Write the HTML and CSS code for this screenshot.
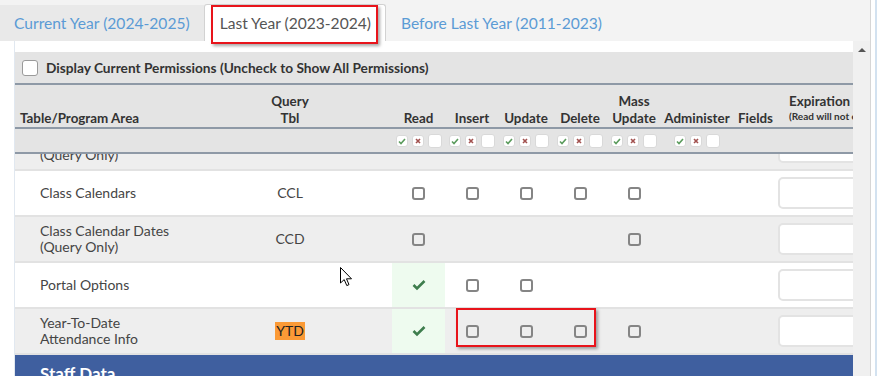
FILE: index.html
```html
<!DOCTYPE html>
<html lang="en">
<head>
    <meta charset="UTF-8">
    <title>Permissions</title>
    <link rel="stylesheet" href="styles.css">
</head>
<body>
<div class="screen">
    <div class="window">
        <div class="tabs">
            <div class="tab first">Current Year (2024-2025)</div>
            <div class="tab active">Last Year (2023-2024)</div>
            <div class="tab">Before Last Year (2011-2023)</div>
        </div>
        <div class="panel">
            <div class="sheet">
                <div class="head">
                    <div class="displayRow">
                        <span class="bigBox"></span>
                        Display Current Permissions (Uncheck to Show All Permissions)
                    </div>
                    <div class="row headRow">
                        <div class="cell area">Table/Program Area</div>
                        <div class="cell query">Query<br>Tbl</div>
                        <div class="cell mid">Read</div>
                        <div class="cell mid">Insert</div>
                        <div class="cell mid">Update</div>
                        <div class="cell mid">Delete</div>
                        <div class="cell mid">Mass<br>Update</div>
                        <div class="cell mid">Administer</div>
                        <div class="cell mid">Fields</div>
                        <div class="cell exp">Expiration<br><small>(Read will not expire)</small></div>
                    </div>
                    <div class="row toolRow" id="toolRow"></div>
                </div>
                <div class="body">
                    <div class="row line gray first">
                        <div class="cell area">Calendar Periods<br>(Query Only)</div>
                        <div class="cell query">CPR</div>
                        <div class="cell mid"><span class="cb"></span></div>
                        <div class="cell mid"></div>
                        <div class="cell mid"></div>
                        <div class="cell mid"></div>
                        <div class="cell mid"></div>
                        <div class="cell mid"></div>
                        <div class="cell mid"></div>
                        <div class="cell exp"><input class="date" type="text"></div>
                    </div>
                    <div class="row line">
                        <div class="cell area">Class Calendars</div>
                        <div class="cell query">CCL</div>
                        <div class="cell mid"><span class="cb"></span></div>
                        <div class="cell mid"><span class="cb"></span></div>
                        <div class="cell mid"><span class="cb"></span></div>
                        <div class="cell mid"><span class="cb"></span></div>
                        <div class="cell mid"><span class="cb"></span></div>
                        <div class="cell mid"></div>
                        <div class="cell mid"></div>
                        <div class="cell exp"><input class="date" type="text"></div>
                    </div>
                    <div class="row line gray">
                        <div class="cell area">Class Calendar Dates<br>(Query Only)</div>
                        <div class="cell query">CCD</div>
                        <div class="cell mid"><span class="cb"></span></div>
                        <div class="cell mid"></div>
                        <div class="cell mid"></div>
                        <div class="cell mid"></div>
                        <div class="cell mid"><span class="cb"></span></div>
                        <div class="cell mid"></div>
                        <div class="cell mid"></div>
                        <div class="cell exp"><input class="date" type="text"></div>
                    </div>
                    <div class="row line">
                        <div class="cell area">Portal Options</div>
                        <div class="cell query"></div>
                        <div class="cell mid granted">
                            <svg width="14" height="12" viewBox="0 0 14 12"><path d="M1.5 6 L5 9.5 L12.5 2" fill="none" stroke="#3e7d4d" stroke-width="2.6"/></svg>
                        </div>
                        <div class="cell mid"><span class="cb"></span></div>
                        <div class="cell mid"><span class="cb"></span></div>
                        <div class="cell mid"></div>
                        <div class="cell mid"></div>
                        <div class="cell mid"></div>
                        <div class="cell mid"></div>
                        <div class="cell exp"><input class="date" type="text"></div>
                    </div>
                    <div class="row line gray">
                        <div class="cell area">Year-To-Date<br>Attendance Info</div>
                        <div class="cell query"><span class="hit">YTD</span></div>
                        <div class="cell mid granted">
                            <svg width="14" height="12" viewBox="0 0 14 12"><path d="M1.5 6 L5 9.5 L12.5 2" fill="none" stroke="#3e7d4d" stroke-width="2.6"/></svg>
                        </div>
                        <div class="cell mid"><span class="cb"></span></div>
                        <div class="cell mid"><span class="cb"></span></div>
                        <div class="cell mid"><span class="cb"></span></div>
                        <div class="cell mid"><span class="cb"></span></div>
                        <div class="cell mid"></div>
                        <div class="cell mid"></div>
                        <div class="cell exp"><input class="date" type="text"></div>
                    </div>
                    <div class="section">Staff Data</div>
                </div>
            </div>
            <div class="scrollbar"><span class="arrowUp"></span></div>
        </div>

        <div class="mark tabMark"></div>
        <div class="mark boxMark"></div>
        <svg class="cursor" width="13" height="20" viewBox="0 0 13 20">
            <path d="M0.5 0.5 L0.5 16 L4.2 12.6 L6.8 18.6 L9 17.6 L6.5 11.8 L11.5 11.8 Z" fill="#fff" stroke="#000" stroke-width="1"/>
        </svg>
    </div>
    <div class="edge"></div>
</div>
<script>
    // the little set / clear / none buttons under each permission heading
    let tools = '<div class="cell area"></div><div class="cell query"></div>';
    let hasTools = [true, true, true, true, true, true, false];
    for (let i = 0; i < hasTools.length; i++) {
        if (hasTools[i]) {
            tools += `
                <div class="cell mid">
                    <span class="mini"><svg width="10" height="10" viewBox="0 0 10 10"><path d="M2 5.5 L4 7.5 L8 3" fill="none" stroke="#5a9b5c" stroke-width="1.6"/></svg></span>
                    <span class="mini"><svg width="10" height="10" viewBox="0 0 10 10"><path d="M3 3 L7 7 M7 3 L3 7" fill="none" stroke="#a2514f" stroke-width="1.6"/></svg></span>
                    <span class="mini blank"></span>
                </div>`;
        } else {
            tools += '<div class="cell mid"></div>';
        }
    }
    tools += '<div class="cell exp"></div>';
    document.getElementById("toolRow").innerHTML = tools;
</script>
</body>
</html>
```

FILE: styles.css
```css
body{
    margin: 0;
    font-family: Lato, "Open Sans", sans-serif;
    background-color: #fff;
    overflow: hidden;
}
.screen{
    display: flex;
    height: 376px;
}
.window{
    position: relative;
    width: 870px;
    border-right: 1px solid #d6d6d6;
    display: flex;
    flex-direction: column;
}
.edge{
    width: 2px;
    margin-left: 4px;
    background-color: #d3e2f0;
}

/* tabs */
.tabs{
    height: 41px;
    flex-shrink: 0;
    background-color: #f3f3f3;
    display: flex;
    align-items: flex-end;
}
.tab{
    height: 36px;
    padding: 0 14px 0 15px;
    display: flex;
    align-items: center;
    font-size: 15.6px;
    color: #5b9bd5;
    box-sizing: border-box;
}
.tab.first{
    padding-left: 14px;
    background-color: #e9e9e9;
}
.tab.active{
    height: 37px;
    background-color: #fff;
    color: #555;
    border: 1px solid #d2d2d2;
    border-bottom: none;
    border-radius: 3px 3px 0 0;
}

/* panel */
.panel{
    flex: 1;
    min-height: 0;
    display: flex;
    padding-left: 14px;
}
.sheet{
    flex: 1;
    min-width: 0;
    padding-top: 11px;
    border-left: 1px solid #e1e8f0;
    display: flex;
    flex-direction: column;
    overflow: hidden;
}
.scrollbar{
    width: 17px;
    background-color: #f0f0f0;
    display: flex;
    justify-content: center;
    padding-top: 7px;
    box-sizing: border-box;
}
.arrowUp{
    width: 0;
    height: 0;
    border-left: 4px solid transparent;
    border-right: 4px solid transparent;
    border-bottom: 4px solid #555;
}

/* header */
.head{
    background-color: #e4e4e4;
    flex-shrink: 0;
}
.displayRow{
    height: 31px;
    display: flex;
    align-items: center;
    gap: 8px;
    padding-left: 7px;
    font-size: 13.7px;
    font-weight: bold;
    color: #333;
    border-bottom: 2px solid #8e99a6;
}
.bigBox{
    width: 16px;
    height: 16px;
    box-sizing: border-box;
    border: 1px solid #9a9a9a;
    border-radius: 3px;
    background-color: #fff;
}
.row{
    display: grid;
    grid-template-columns: 215px 162px 53px 54px 54px 54px 54px 72px 45px 120px;
    width: 883px;
}
.cell{
    display: flex;
    align-items: center;
    justify-content: center;
    text-align: center;
}
.cell.area{
    justify-content: flex-start;
    text-align: left;
    padding-left: 25px;
}
.cell.query{
    padding-right: 42px;
}
.cell.exp{
    justify-content: flex-start;
    text-align: left;
}
.headRow{
    height: 42px;
    font-size: 13.4px;
    font-weight: bold;
    color: #333;
    line-height: 17px;
    border-bottom: 2px solid #8e99a6;
}
.headRow .cell{
    align-items: flex-end;
}
.headRow .cell.area{
    padding-left: 5px;
}
.headRow .cell.exp{
    padding-left: 11px;
    white-space: nowrap;
    display: block;
    padding-top: 8px;
}
.headRow small{
    font-size: 10px;
    font-weight: bold;
    line-height: 12px;
    display: block;
}
.toolRow{
    height: 23px;
    border-bottom: 2px solid #8e99a6;
}
.toolRow .cell{
    gap: 4px;
}
.mini{
    width: 12px;
    height: 12px;
    box-sizing: border-box;
    border: 1px solid #d9d9d9;
    border-radius: 3px;
    background-color: #fff;
    display: flex;
    align-items: center;
    justify-content: center;
}
.mini.blank{
    width: 14px;
    height: 14px;
}

/* body */
.body{
    flex: 1;
    min-height: 0;
    overflow: hidden;
}
.line{
    height: 46px;
    box-sizing: border-box;
    border-bottom: 2px solid #e2e2e2;
    font-size: 14px;
    line-height: 16px;
    color: #454545;
    background-color: #fff;
}
.line.gray{
    background-color: #eeeeee;
}
.line.first{
    margin-top: -29px;
}
.cell.granted{
    background-color: #eefbef;
}
.cb{
    width: 13px;
    height: 13px;
    box-sizing: border-box;
    border: 2px solid #858585;
    border-radius: 3px;
}
.hit{
    background-color: #fb9a36;
    color: #222;
    padding: 1px 1px;
}
.date{
    width: 110px;
    height: 32px;
    box-sizing: border-box;
    border: 2px solid #e3e3e3;
    border-radius: 5px;
    background-color: #fff;
    margin: 0;
}
.section{
    height: 40px;
    background-color: #3f5f9f;
    color: #fff;
    font-weight: bold;
    font-size: 17px;
    padding: 8px 0 0 25px;
}

/* overlays */
.mark{
    position: absolute;
    border: 2px solid #e8141b;
    box-shadow: 2px 2px 3px rgba(0, 0, 0, 0.35);
}
.tabMark{
    left: 211px;
    top: 5px;
    width: 163px;
    height: 35px;
}
.boxMark{
    left: 456px;
    top: 308px;
    width: 136px;
    height: 35px;
}
.cursor{
    position: absolute;
    left: 340px;
    top: 267px;
}
```
